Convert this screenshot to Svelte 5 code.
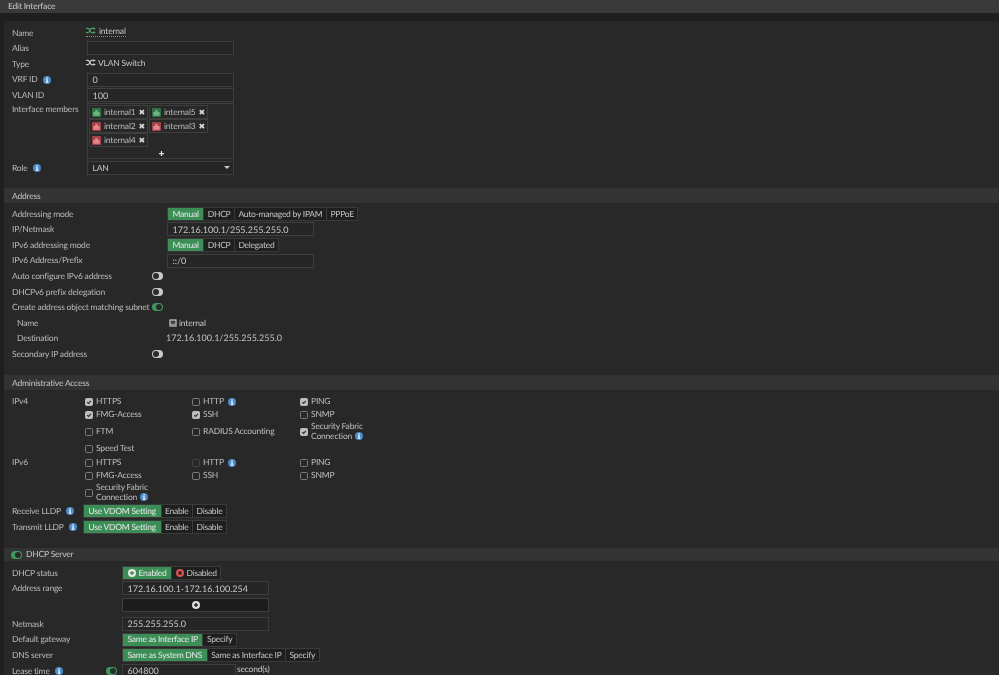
<script lang="ts">
  type Seg = { label: string; on?: boolean };
  type Check = { label: string; on?: boolean; info?: boolean; dim?: boolean; two?: string };

  const members = [
    { name: 'internal1', up: true },
    { name: 'internal5', up: true },
    { name: 'internal2', up: false },
    { name: 'internal3', up: false },
    { name: 'internal4', up: false }
  ];

  const ipv4: Check[] = [
    { label: 'HTTPS', on: true },
    { label: 'HTTP', info: true },
    { label: 'PING', on: true },
    { label: 'FMG-Access', on: true },
    { label: 'SSH', on: true },
    { label: 'SNMP' },
    { label: 'FTM' },
    { label: 'RADIUS Accounting' },
    { label: 'Security Fabric', two: 'Connection', on: true, info: true },
    { label: 'Speed Test' }
  ];

  const ipv6: Check[] = [
    { label: 'HTTPS' },
    { label: 'HTTP', info: true, dim: true },
    { label: 'PING' },
    { label: 'FMG-Access' },
    { label: 'SSH' },
    { label: 'SNMP' },
    { label: 'Security Fabric', two: 'Connection', info: true }
  ];

  const lldp: Seg[] = [{ label: 'Use VDOM Setting', on: true }, { label: 'Enable' }, { label: 'Disable' }];
</script>

{#snippet info()}
  <svg class="info" viewBox="0 0 12 12" aria-hidden="true">
    <circle cx="6" cy="6" r="6" fill="#4a8cc9" />
    <rect x="5" y="2" width="2.2" height="1.9" fill="#f2f6fa" />
    <path d="M4.2 4.8h3v3.9h1V10H4.1V8.7h1V6.1h-.9z" fill="#f2f6fa" />
  </svg>
{/snippet}

{#snippet shuffle(color: string)}
  <svg class="shuffle" viewBox="0 0 12 8" aria-hidden="true">
    <g fill="none" stroke={color} stroke-width="1.5">
      <path d="M0 1.5h2.6c1.8 0 2.2 5 4 5H9" />
      <path d="M0 6.5h2.6c1.8 0 2.2-5 4-5H9" />
    </g>
    <path d="M8.6 0L12 1.5 8.6 3zM8.6 5L12 6.5 8.6 8z" fill={color} />
  </svg>
{/snippet}

{#snippet toggle(on: boolean)}
  <span class="toggle" class:on><i></i></span>
{/snippet}

{#snippet segs(items: Seg[])}
  <div class="segs">
    {#each items as s}
      <span class="seg" class:on={s.on}>{s.label}</span>
    {/each}
  </div>
{/snippet}

{#snippet checks(items: Check[])}
  {#each items as c}
    <div class="check" class:dim={c.dim}>
      <span class="box" class:on={c.on}>
        {#if c.on}
          <svg viewBox="0 0 10 10" aria-hidden="true">
            <path d="M2 5.2l2.2 2.2L8.2 3" fill="none" stroke="#2a2a2a" stroke-width="1.7" />
          </svg>
        {/if}
      </span>
      {#if c.two}
        <span class="lines">{c.label}<br />{c.two}{#if c.info}{@render info()}{/if}</span>
      {:else}
        <span>{c.label}</span>
        {#if c.info}{@render info()}{/if}
      {/if}
    </div>
  {/each}
{/snippet}

<div class="page">
  <header class="top">Edit Interface</header>

  <main class="card">
    <section class="sec first">
      <div class="row w87">
        <label>Name</label>
        <span class="val up dotted">{@render shuffle('#4f9a66')}<span class="nm">internal</span></span>
      </div>
      <div class="row w87"><label>Alias</label><span class="input"></span></div>
      <div class="row w87">
        <label>Type</label>
        <span class="val up">{@render shuffle('#c8c8c8')}VLAN Switch</span>
      </div>
      <div class="row w87">
        <label>VRF ID {@render info()}</label><span class="input num">0</span>
      </div>
      <div class="row w87"><label>VLAN ID</label><span class="input num">100</span></div>
      <div class="row w87 members-row">
        <label>Interface members</label>
        <div class="members">
          <div class="chips">
            {#each members as m}
              <span class="chip">
                <svg class="port" viewBox="0 0 10 10" aria-hidden="true">
                  <rect width="10" height="10" rx="1" fill={m.up ? '#2f7343' : '#a8424a'} />
                  <path d="M1.5 8.5V4.5h2V2.5h3v2h2v4z" fill={m.up ? '#6fb583' : '#e08a90'} />
                </svg>
                {m.name}<b>✖</b>
              </span>
            {/each}
          </div>
          <svg class="plus" viewBox="0 0 6 6" aria-hidden="true">
            <path d="M0 3h6M3 0v6" stroke="#e0e0e0" stroke-width="1.5" />
          </svg>
        </div>
      </div>
      <div class="row w87 role">
        <label>Role {@render info()}</label>
        <span class="input select">LAN<i class="caret"></i></span>
      </div>
    </section>

    <h2 class="head">Address</h2>
    <section class="sec address">
      <div class="row w167">
        <label>Addressing mode</label>
        {@render segs([{ label: 'Manual', on: true }, { label: 'DHCP' }, { label: 'Auto-managed by IPAM' }, { label: 'PPPoE' }])}
      </div>
      <div class="row w167"><label>IP/Netmask</label><span class="input num">172.16.100.1/255.255.255.0</span></div>
      <div class="row w167">
        <label>IPv6 addressing mode</label>
        {@render segs([{ label: 'Manual', on: true }, { label: 'DHCP' }, { label: 'Delegated' }])}
      </div>
      <div class="row w167"><label>IPv6 Address/Prefix</label><span class="input num">::/0</span></div>
      <div class="row sw"><label>Auto configure IPv6 address</label>{@render toggle(false)}</div>
      <div class="row sw"><label>DHCPv6 prefix delegation</label>{@render toggle(false)}</div>
      <div class="row sw"><label>Create address object matching subnet</label>{@render toggle(true)}</div>
      <div class="row w167 sub">
        <label>Name</label>
        <span class="val named">
          <svg class="monitor" viewBox="0 0 10 10" aria-hidden="true">
            <rect x=".5" y=".5" width="9" height="9" fill="#c8c8c8" />
            <rect x="2" y="2" width="6" height="4" fill="#3a3a3a" />
            <rect x="1.5" y="7" width="7" height="1" fill="#3a3a3a" />
          </svg>
          internal
        </span>
      </div>
      <div class="row w167 sub">
        <label>Destination</label>
        <span class="val dest">172.16.100.1/255.255.255.0</span>
      </div>
      <div class="row sw"><label>Secondary IP address</label>{@render toggle(false)}</div>
    </section>

    <h2 class="head">Administrative Access</h2>
    <section class="sec admin">
      <div class="access v4">
        <label>IPv4</label>
        <div class="grid">{@render checks(ipv4)}</div>
      </div>
      <div class="access v6">
        <label>IPv6</label>
        <div class="grid">{@render checks(ipv6)}</div>
      </div>
      <div class="row lldp"><label>Receive LLDP {@render info()}</label>{@render segs(lldp)}</div>
      <div class="row lldp"><label>Transmit LLDP {@render info()}</label>{@render segs(lldp)}</div>
    </section>

    <h2 class="head dhcp-head">{@render toggle(true)}DHCP Server</h2>
    <section class="sec dhcp">
      <div class="row w122">
        <label>DHCP status</label>
        <div class="segs">
          <span class="seg on">
            <svg class="round" viewBox="0 0 10 10" aria-hidden="true">
              <circle cx="5" cy="5" r="5" fill="#e8e8e8" />
              <path d="M2.4 5h5.2M5 2.4v5.2" stroke="#3c8e57" stroke-width="1.6" />
            </svg>
            Enabled
          </span>
          <span class="seg">
            <svg class="round" viewBox="0 0 10 10" aria-hidden="true">
              <circle cx="5" cy="5" r="5" fill="#d9534f" />
              <path d="M2.4 5h5.2M5 2.4v5.2" stroke="#1f1f1f" stroke-width="1.6" transform="rotate(45 5 5)" />
            </svg>
            Disabled
          </span>
        </div>
      </div>
      <div class="row w122"><label>Address range</label><span class="input num">172.16.100.1-172.16.100.254</span></div>
      <div class="row w122 add-row">
        <label></label>
        <span class="input add">
          <svg class="round" viewBox="0 0 10 10" aria-hidden="true">
            <circle cx="5" cy="5" r="5" fill="#dcdcdc" />
            <path d="M2.6 5h4.8M5 2.6v4.8" stroke="#1c1c1c" stroke-width="1.6" />
          </svg>
        </span>
      </div>
      <div class="row w122"><label>Netmask</label><span class="input num">255.255.255.0</span></div>
      <div class="row w122">
        <label>Default gateway</label>
        {@render segs([{ label: 'Same as Interface IP', on: true }, { label: 'Specify' }])}
      </div>
      <div class="row w122">
        <label>DNS server</label>
        {@render segs([{ label: 'Same as System DNS', on: true }, { label: 'Same as Interface IP' }, { label: 'Specify' }])}
      </div>
      <div class="row w122 lease">
        <label>Lease time {@render info()}</label>
        {@render toggle(true)}
        <span class="input short num">604800</span>
        <span class="unit">second(s)</span>
      </div>
    </section>
  </main>
</div>

<style>
  :global(body) { margin: 0; background: #1f1f1f; }
  .page { width: 999px; height: 675px; overflow: hidden; background: #1f1f1f; color: #c4c4c4;
    font: 8.5px/1 Lato, "Liberation Sans", sans-serif; letter-spacing: -.2px; text-rendering: geometricPrecision;
    filter: blur(.3px); }
  .top { height: 13px; padding-left: 8px; background: #3a3a3a; line-height: 13px; color: #c8c8c8; }
  .card { margin: 8px 0 0 4px; background: #282828; height: 660px; }

  .sec { padding-left: 8px; }
  .sec.first { padding-top: 4px; height: 167px; box-sizing: border-box; }
  .sec.address { padding-top: 3px; height: 172px; box-sizing: border-box; }
  .sec.admin { padding-top: 5px; height: 158px; box-sizing: border-box; }
  .sec.dhcp { padding-top: 4px; }

  .head { margin: 0; height: 15px; padding-left: 8px; background: #333; color: #c4c4c4; font-size: 8.5px;
    font-weight: 400; line-height: 16.5px; }
  .dhcp-head { display: flex; align-items: center; gap: 4px; height: 13px; line-height: 15px; padding-left: 7px; }

  .row { display: flex; align-items: center; height: 15.6px; white-space: nowrap; }
  label { display: flex; align-items: center; gap: 5px; flex: none; color: #b9b9b9; }
  .w87 label { width: 75px; }
  .w167 label { width: 155px; }
  .w122 label { width: 110px; }
  .sub label { padding-left: 5px; width: 150px; }

  .input { box-sizing: border-box; display: flex; align-items: center; width: 147px; height: 14px; padding-left: 4.5px;
    background: #262626; border: 1px solid #3e3e3e; color: #c8c8c8; }
  .num, .dest { font-size: 9px; letter-spacing: 0; }
  .select { position: relative; }
  .caret { position: absolute; right: 3px; top: 4px; border: 3px solid transparent; border-top: 3px solid #c8c8c8; }
  .val { display: flex; align-items: center; gap: 2px; }
  .up { position: relative; top: -1px; left: -1px; }
  .dest { margin-left: -1px; position: relative; top: -1px; }
  .named { padding-left: 2px; }
  .dotted { border-bottom: 1px dotted #8a8a8a; padding-bottom: 1px; }
  .nm { margin-left: 1px; }

  .shuffle { width: 10px; height: 7px; flex: none; }
  .info { width: 8px; height: 8px; flex: none; }
  .monitor { width: 8px; height: 8px; }
  .round { width: 8px; height: 8px; flex: none; }
  .port { width: 9px; height: 9px; flex: none; }

  .members-row { align-items: flex-start; height: 58px; margin-top: .5px; }
  .members-row label { padding-top: 2px; }
  .members { box-sizing: border-box; width: 147px; height: 56px; border: 1px solid #3e3e3e; padding: 1px 0 0 1px; }
  .chips { display: grid; grid-template-columns: 60px 60px; justify-content: start; }
  .chip { box-sizing: border-box; display: flex; align-items: center; gap: 3px; height: 14px; width: 59px;
    padding: 0 2px; border: 1px solid #3e3e3e; color: #b9b9b9; }
  .chip b { margin-left: auto; font-size: 8px; font-weight: 400; color: #d8d8d8; }
  .plus { display: block; width: 5px; height: 5px; margin: 4px auto 0; }
  .role { margin-top: -1px; }

  .segs { display: flex; height: 14px; border: 1px solid #3a3a3a; box-sizing: border-box; }
  .seg { display: flex; align-items: center; gap: 3px; padding: 0 3.5px; background: #1f1f1f; color: #c4c4c4;
    border-left: 1px solid #3a3a3a; letter-spacing: -.25px; }
  .seg:first-child { border-left: 0; }
  .seg.on { padding: 0 4.5px; background: #3c8e57; color: #e6e6e6; }

  .sw label { width: 140px; }
  .toggle { position: relative; display: block; box-sizing: border-box; flex: none; width: 11px; height: 8px; border-radius: 4px; background: #c9c9c9; }
  .toggle i { position: absolute; left: 1px; top: 1px; width: 6px; height: 6px; border-radius: 50%; background: #2b2b2b; }
  .toggle.on { background: #3d9a5c; }
  .toggle.on i { left: auto; right: 1px; }

  .access { display: flex; }
  .access label { width: 73px; align-self: flex-start; padding-top: 2px; }
  .grid { display: grid; grid-template-columns: 107px 108px 110px; align-items: center; }
  .v4 .grid { grid-template-rows: 13px 13px 21px 13px; }
  .v6 .grid { grid-template-rows: 13px 13px 21px; }
  .v6 { margin-top: 1px; }
  .check { display: flex; align-items: center; gap: 3px; color: #bdbdbd; }
  .check .info { margin-left: 1px; }
  .check.dim .box { border-color: #474747; }
  .lines { line-height: 9.5px; }
  .lines .info { margin-left: 3px; vertical-align: -1px; }
  .box { box-sizing: border-box; display: block; flex: none; width: 8px; height: 8px; border: 1px solid #7a7a7a; border-radius: 1.5px; }
  .box.on { background: #bdbdbd; border-color: #bdbdbd; }
  .box svg { display: block; width: 6px; height: 6px; }

  .lldp { height: 16px; }
  .lldp label { width: 71px; }

  .add-row .add { justify-content: center; padding: 0; background: #1c1c1c; }
  .add-row { height: 20px; padding: 1px 0 4px; box-sizing: border-box; }
  .lease label { width: 94px; }
  .lease .toggle { margin-right: 5px; }
  .short { width: 114px; }
  .unit { margin-left: 1px; position: relative; top: -2px; }
</style>
